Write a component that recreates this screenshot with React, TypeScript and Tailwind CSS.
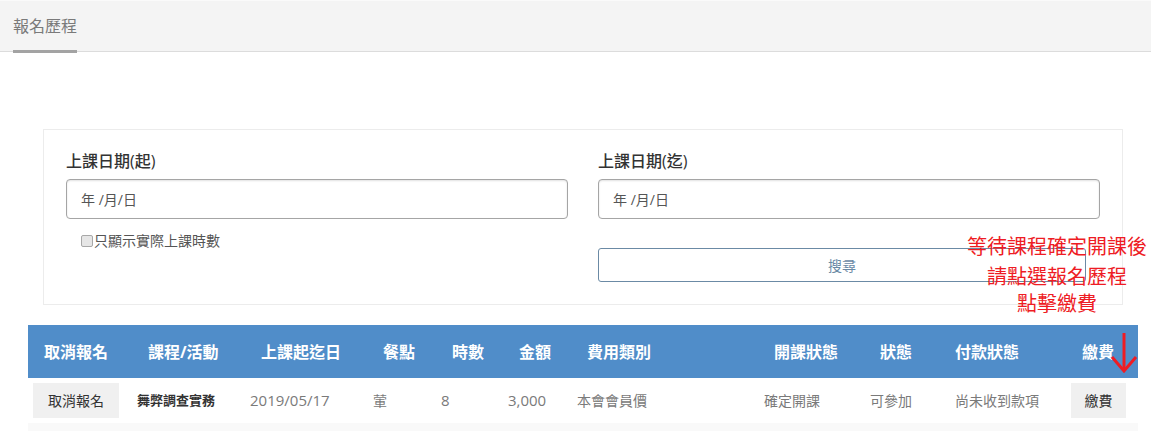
const font = "font-['Open_Sans','Noto_Sans_CJK_TC',sans-serif]"

const cols = 'grid grid-cols-[104px_113px_123px_68px_67px_69px_187px_106px_85px_116px_72px]'

const headers: { label: string; pad: string }[] = [
  { label: '取消報名', pad: 'pl-[16px]' },
  { label: '課程/活動', pad: 'pl-[16px]' },
  { label: '上課起迄日', pad: 'pl-[16px]' },
  { label: '餐點', pad: 'pl-[15px]' },
  { label: '時數', pad: 'pl-[16px]' },
  { label: '金額', pad: 'pl-[16px]' },
  { label: '費用類別', pad: 'pl-[15px]' },
  { label: '開課狀態', pad: 'pl-[15px]' },
  { label: '狀態', pad: 'pl-[15px]' },
  { label: '付款狀態', pad: 'pl-[5px]' },
  { label: '繳費', pad: 'pl-[16px]' },
]

function DateField({ label }: { label: string }) {
  return (
    <div className="flex flex-col">
      <label className="text-[16px] font-medium text-[#333] leading-[22px] mb-[7px]">{label}</label>
      <div className="h-[40px] rounded-[4px] border border-[#a5a5a5] shadow-[inset_0_1px_2px_rgba(0,0,0,0.12)] flex items-center pl-[14px] text-[14px] text-[#555]">
        年 /月/日
      </div>
    </div>
  )
}

function DownArrow() {
  return (
    <svg width="28" height="40" viewBox="0 0 28 40" className="absolute left-[1110px] top-[333px]">
      <path d="M14 0 V37" stroke="#ee1c24" strokeWidth="3" fill="none" />
      <path d="M2 24 L14 38 L26 24" stroke="#ee1c24" strokeWidth="3" fill="none" strokeLinejoin="miter" />
    </svg>
  )
}

export default function App() {
  return (
    <div className={`relative w-full min-h-[431px] bg-white ${font}`}>
      {/* Tab bar */}
      <div className="h-[52px] bg-[#f4f4f4] border-t border-[#fafafa] border-b border-b-[#dcdcdc] flex items-end px-[13px]">
        <div className="h-full flex flex-col justify-between">
          <span className="pt-[14px] text-[16px] text-[#7a7a7a] leading-[22px]">報名歷程</span>
          <div className="h-[3px] bg-[#a3a3a3] -mb-[2px]" />
        </div>
      </div>

      {/* Search panel */}
      <div className="mt-[77px] ml-[43px] w-[1080px] h-[176px] border border-[#ececec] px-[22px] pt-[20px]">
        <div className="grid grid-cols-2 gap-x-[30px]">
          <div>
            <DateField label="上課日期(起)" />
            <div className="flex items-center gap-[1px] mt-[14px] ml-[15px] text-[14px] text-[#555] leading-[16px]">
              <span className="w-[12px] h-[12px] rounded-[2px] border border-[#a8a8a8] bg-[#e6e6e6]" />
              只顯示實際上課時數
            </div>
          </div>
          <div>
            <DateField label="上課日期(迄)" />
            <div className="mt-[29px] w-[488px] h-[34px] rounded-[3px] border border-[#6b8aa5] flex items-center justify-center text-[14px] text-[#6b8aa5]">
              搜尋
            </div>
          </div>
        </div>
      </div>

      {/* Table */}
      <div className="mt-[20px] ml-[28px] w-[1110px]">
        <div className={`${cols} h-[53px] bg-[#508dc9] items-center text-[16px] font-bold text-white`}>
          {headers.map((h) => (
            <div key={h.label} className={h.pad}>{h.label}</div>
          ))}
        </div>
        <div className={`${cols} h-[45px] pt-[5px] pb-[5px] items-center text-[14px] text-[#7a7a7a]`}>
          <div className="pl-[5px]">
            <span className="flex items-center justify-center w-[86px] h-[35px] bg-[#f0f0f0] text-[#333]">取消報名</span>
          </div>
          <div className="pl-[5px] text-[13px] font-bold text-[#333]">舞弊調查實務</div>
          <div className="pl-[5px] text-[15px]">2019/05/17</div>
          <div className="pl-[5px]">葷</div>
          <div className="pl-[5px] text-[15px]">8</div>
          <div className="pl-[5px] text-[15px]">3,000</div>
          <div className="pl-[5px]">本會會員價</div>
          <div className="pl-[5px]">確定開課</div>
          <div className="pl-[5px]">可參加</div>
          <div className="pl-[5px]">尚未收到款項</div>
          <div className="pl-[5px]">
            <span className="flex items-center justify-center w-[55px] h-[35px] bg-[#f0f0f0] text-[#333]">繳費</span>
          </div>
        </div>
        <div className="h-[10px] bg-[#f9f9f9]" />
      </div>

      {/* Annotation */}
      <div className="absolute left-[957px] top-[233px] w-[200px] text-center text-[20px] leading-[28px] text-[#ee1c24]">
        <div>等待課程確定開課後</div>
        <div className="mt-[2px]">請點選報名歷程</div>
        <div className="-mt-[1px]">點擊繳費</div>
      </div>
      <DownArrow />
    </div>
  )
}
